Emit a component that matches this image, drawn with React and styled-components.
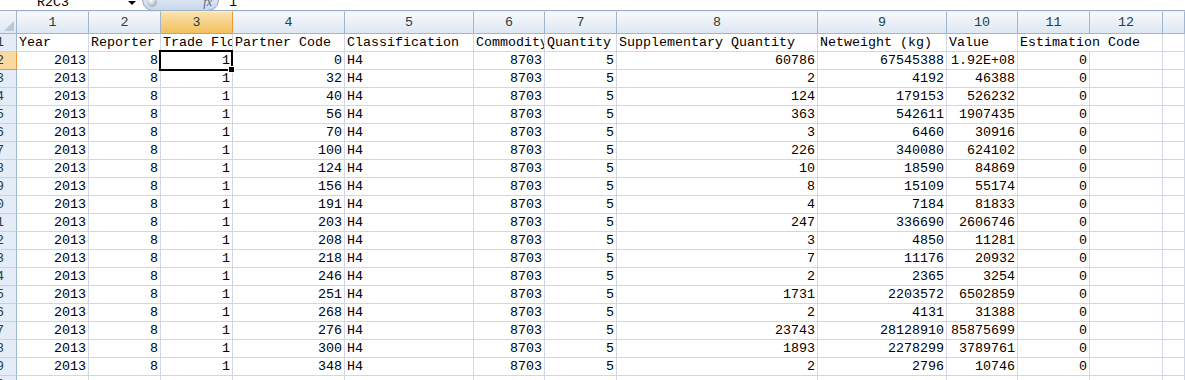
import React from "react";
import styled, { createGlobalStyle } from "styled-components";

const GlobalStyle = createGlobalStyle`
  html, body {
    margin: 0;
    padding: 0;
    background: #ffffff;
    overflow: hidden;
  }
  body {
    font-family: "Liberation Mono", "Noto Sans CJK SC", monospace;
  }
`;

const COLS = [72, 72, 72, 112, 129, 71, 72, 201, 129, 71, 72, 73];

const HEADERS = [
  "Year",
  "Reporter",
  "Trade Flow",
  "Partner Code",
  "Classification",
  "Commodity",
  "Quantity",
  "Supplementary Quantity",
  "Netweight (kg)",
  "Value",
  "Estimation Code",
  "",
];

// partner, supplementary, netweight, value
const DATA = [
  [0, 60786, 67545388, "1.92E+08"],
  [32, 2, 4192, 46388],
  [40, 124, 179153, 526232],
  [56, 363, 542611, 1907435],
  [70, 3, 6460, 30916],
  [100, 226, 340080, 624102],
  [124, 10, 18590, 84869],
  [156, 8, 15109, 55174],
  [191, 4, 7184, 81833],
  [203, 247, 336690, 2606746],
  [208, 3, 4850, 11281],
  [218, 7, 11176, 20932],
  [246, 2, 2365, 3254],
  [251, 1731, 2203572, 6502859],
  [268, 2, 4131, 31388],
  [276, 23743, 28128910, 85875699],
  [300, 1893, 2278299, 3789761],
  [348, 2, 2796, 10746],
];

const Toolbar = styled.div`
  height: 10px;
  overflow: hidden;
  border-bottom: 1px solid #9aaec8;
  background: #ffffff;
`;

const ToolRow = styled.div`
  display: flex;
  align-items: flex-start;
  font-size: 13.33px;
  line-height: 14px;
  color: #000000;
`;

const NameBox = styled.div`
  width: 91px;
  padding-left: 37px;
  margin-top: -4px;
`;

const DropArrow = styled.div`
  width: 0;
  height: 0;
  margin-top: 1px;
  border-left: 4px solid transparent;
  border-right: 4px solid transparent;
  border-top: 4px solid #000000;
`;

const FxPill = styled.div`
  display: flex;
  align-items: center;
  justify-content: space-between;
  box-sizing: border-box;
  width: 77px;
  height: 22px;
  margin-top: -11px;
  margin-left: 6px;
  padding: 0 6px 0 4px;
  border: 1px solid #8fa6c4;
  border-radius: 11px;
  background: linear-gradient(#eef3fa, #c8d7ec);
`;

const Knob = styled.div`
  width: 10px;
  height: 10px;
  margin-top: 4px;
  border-radius: 50%;
  background: radial-gradient(circle at 40% 35%, #ffffff, #a9b3bf 70%);
`;

const FxLabel = styled.span`
  margin-top: 4px;
  font-family: "Liberation Serif", serif;
  font-style: italic;
  font-size: 12px;
  color: #59636e;
`;

const FormulaValue = styled.div`
  margin-left: 10px;
  margin-top: -4px;
`;

const Sheet = styled.div`
  display: grid;
  grid-template-columns: 17px ${COLS.map((w) => `${w}px`).join(" ")} 1fr;
  grid-template-rows: 23px;
  grid-auto-rows: 18px;
  font-size: 13.33px;
`;

const Corner = styled.div`
  position: relative;
  box-sizing: border-box;
  border-right: 1px solid #9eb6ce;
  border-bottom: 1px solid #9eb6ce;
  background: linear-gradient(#f4f7fb, #dfe7f2);
  svg {
    position: absolute;
    right: 2px;
    bottom: 2px;
  }
`;

const ColHead = styled.div`
  box-sizing: border-box;
  border-top: 1px solid #e8eef6;
  border-right: 1px solid ${(p) => (p.$active ? "#f29536" : "#9eb6ce")};
  border-bottom: 1px solid ${(p) => (p.$active ? "#f29536" : "#9eb6ce")};
  background: ${(p) =>
    p.$active
      ? "linear-gradient(#fbe3ae, #f6d086 50%, #f1c15f)"
      : "linear-gradient(#f7f9fc, #eaf0f8 50%, #dee7f2)"};
  color: #27413e;
  text-align: center;
  line-height: 21px;
`;

const RowHead = styled.div`
  display: flex;
  justify-content: flex-end;
  box-sizing: border-box;
  padding-right: 12px;
  overflow: hidden;
  white-space: nowrap;
  border-right: 1px solid ${(p) => (p.$active ? "#f29536" : "#9eb6ce")};
  border-bottom: 1px solid ${(p) => (p.$active ? "#f29536" : "#c5d3e3")};
  background: ${(p) => (p.$active ? "#f9d99f" : "#e4ecf7")};
  color: #27413e;
  line-height: 17px;
`;

const Cell = styled.div`
  position: relative;
  box-sizing: border-box;
  padding: 0 2px;
  border-right: 1px solid ${(p) => (p.$spill ? "transparent" : "#d0d7e5")};
  border-bottom: 1px solid #d0d7e5;
  overflow: ${(p) => (p.$spill || p.$selected ? "visible" : "hidden")};
  z-index: ${(p) => (p.$spill || p.$selected ? 2 : "auto")};
  white-space: nowrap;
  text-align: ${(p) => (p.$num ? "right" : "left")};
  line-height: 17px;
  color: #000000;

  ${(p) =>
    p.$selected &&
    `
    &::before {
      content: "";
      position: absolute;
      top: -2px;
      left: -2px;
      right: -1px;
      bottom: -2px;
      border: 2px solid #000000;
    }
    &::after {
      content: "";
      position: absolute;
      right: -3px;
      bottom: -4px;
      width: 5px;
      height: 5px;
      background: #000000;
      border: 1px solid #ffffff;
    }
  `}
`;

const Triangle = () => (
  <svg width="10" height="10" viewBox="0 0 10 10">
    <polygon points="10,0 10,10 0,10" fill="#b9c7d8" />
  </svg>
);

const App = () => {
  const rows = [
    HEADERS,
    ...DATA.map(([partner, supp, net, value]) => [
      2013,
      8,
      1,
      partner,
      "H4",
      8703,
      5,
      supp,
      net,
      value,
      0,
      "",
    ]),
    new Array(12).fill(""),
  ];

  return (
    <>
      <GlobalStyle />
      <Toolbar>
        <ToolRow>
          <NameBox>R2C3</NameBox>
          <DropArrow />
          <FxPill>
            <Knob />
            <FxLabel>fx</FxLabel>
          </FxPill>
          <FormulaValue>1</FormulaValue>
        </ToolRow>
      </Toolbar>
      <Sheet>
        <Corner>
          <Triangle />
        </Corner>
        {COLS.map((_, i) => (
          <ColHead key={i} $active={i === 2}>
            {i + 1}
          </ColHead>
        ))}
        <ColHead />
        {rows.map((row, r) => (
          <React.Fragment key={r}>
            <RowHead $active={r === 1}>{r + 1}</RowHead>
            {row.map((v, c) => (
              <Cell
                key={c}
                $num={r > 0 && c !== 4}
                $spill={r === 0 && c === 10}
                $selected={r === 1 && c === 2}
              >
                {v}
              </Cell>
            ))}
            <Cell />
          </React.Fragment>
        ))}
      </Sheet>
    </>
  );
};

export default App;
